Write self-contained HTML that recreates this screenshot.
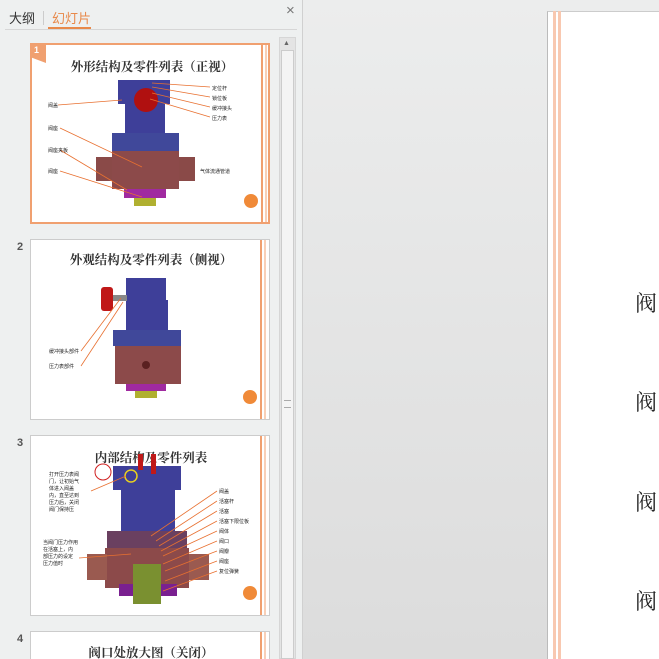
<!DOCTYPE html>
<html style="width:659px;height:659px;overflow:hidden"><head><meta charset="utf-8"><style>
*{margin:0;padding:0;box-sizing:border-box}
body{width:659px;height:659px;overflow:hidden;position:relative;background:#e6e6e6;font-family:"Liberation Sans","Noto Sans CJK SC",sans-serif}
.left{position:absolute;left:0;top:0;width:303px;height:659px;background:#eef0f0;border-right:1px solid #d0d0d0}
.right{position:absolute;left:303px;top:0;width:356px;height:659px;background:linear-gradient(#eceded,#dcdcdc)}
.tab{position:absolute;top:8px;font-size:13px;color:#333}
.thumb{position:absolute;left:30px;width:240px;height:181px;background:#fff;border:1px solid #ccc;overflow:hidden}
.num{position:absolute;left:17px;font-size:11px;color:#555;font-weight:bold}
.tt{position:absolute;left:0;width:240px;text-align:center;font:bold 12.5px "Liberation Serif","Noto Serif CJK SC",serif;color:#333}
.slide{position:absolute;left:547px;top:11px;width:112px;height:648px;background:#fff;border-left:1px solid #bbb;border-top:1px solid #ccc}
.ch{position:absolute;left:635px;font:22px "Liberation Serif","Noto Serif CJK SC",serif;color:#222}
</style></head><body>
<div class="left">
<div class="tab" style="left:9px">大纲</div>
<div style="position:absolute;left:43px;top:11px;width:1px;height:14px;background:#ccc"></div>
<div class="tab" style="left:52px;color:#e8894a">幻灯片</div>
<div style="position:absolute;left:48px;top:27px;width:43px;height:2px;background:#e8894a"></div>
<div style="position:absolute;left:5px;top:29px;width:292px;height:1px;background:#d6d6d6"></div>
<div style="position:absolute;left:286px;top:2px;font-size:15px;color:#777">×</div>
<div style="position:absolute;left:279px;top:37px;width:17px;height:622px;background:#e4e4e4;border:1px solid #d6d6d6"></div>
<div style="position:absolute;left:281px;top:50px;width:13px;height:609px;background:#f4f4f4;border:1px solid #ccc"></div>
<div style="position:absolute;left:283px;top:40px;font-size:7px;color:#666">▲</div>
<div style="position:absolute;left:284px;top:400px;width:7px;height:8px;border-top:1px solid #aaa;border-bottom:1px solid #aaa"></div>
</div>
<div class="right"></div>

<!-- slide 1 -->
<div class="thumb" style="top:43px;border:2px solid #f0a070;overflow:visible">
<div style="position:absolute;left:-2px;top:-2px;width:16px;height:20px;background:#f0a070;clip-path:polygon(0 0,100% 0,100% 100%,0 70%)"></div>
<div style="position:absolute;left:2px;top:0;font-size:9px;color:#fff;font-weight:bold">1</div>
<div class="tt" style="top:12px">外形结构及零件列表（正视）</div>
<svg width="238" height="179" style="position:absolute;left:0;top:0">
<line x1="230" y1="0" x2="230" y2="179" stroke="#f0a070" stroke-width="2"/><line x1="234" y1="0" x2="234" y2="179" stroke="#f0a070"/>
<rect x="86" y="35" width="52" height="24" fill="#3e3f99"/>
<rect x="93" y="58" width="40" height="32" fill="#3e3f99"/>
<rect x="80" y="88" width="67" height="18" fill="#40489a"/>
<rect x="80" y="106" width="67" height="38" fill="#8c4a4a"/>
<rect x="64" y="112" width="16" height="24" fill="#8a4a48"/><rect x="147" y="112" width="16" height="24" fill="#8a4a48"/>
<rect x="92" y="144" width="42" height="9" fill="#a02aa0"/>
<rect x="102" y="153" width="22" height="8" fill="#b0b030"/>
<circle cx="114" cy="55" r="12" fill="#b01010"/>
<g stroke="#e87030" stroke-width="0.8"><line x1="120" y1="38" x2="178" y2="42"/><line x1="120" y1="42" x2="178" y2="52"/><line x1="120" y1="48" x2="178" y2="62"/><line x1="118" y1="54" x2="178" y2="72"/><line x1="26" y1="60" x2="90" y2="55"/><line x1="28" y1="83" x2="110" y2="122"/><line x1="28" y1="105" x2="95" y2="145"/><line x1="28" y1="126" x2="110" y2="152"/></g>
<g font-size="5" fill="#222"><text x="16" y="62">阀盖</text><text x="16" y="85">阀座</text><text x="16" y="107">阀座夹板</text><text x="16" y="128">阀座</text><text x="180" y="45">定位杆</text><text x="180" y="55">锁位板</text><text x="180" y="65">缓冲接头</text><text x="180" y="75">压力表</text><text x="168" y="128">气体流通管道</text></g>
<circle cx="219" cy="156" r="7" fill="#f08a38"/>
</svg></div>

<!-- slide 2 -->
<div class="num" style="top:241px">2</div>
<div class="thumb" style="top:239px">
<div class="tt" style="top:10px">外观结构及零件列表（侧视）</div>
<svg width="238" height="179" style="position:absolute;left:0;top:0">
<line x1="230" y1="0" x2="230" y2="179" stroke="#f0a070" stroke-width="2"/><line x1="234" y1="0" x2="234" y2="179" stroke="#f0a070"/>
<rect x="95" y="38" width="40" height="24" fill="#3e3f99"/>
<rect x="95" y="60" width="42" height="32" fill="#3e3f99"/>
<rect x="82" y="90" width="68" height="16" fill="#40489a"/>
<rect x="84" y="106" width="66" height="38" fill="#8c4a4a"/>
<rect x="95" y="144" width="40" height="7" fill="#a02aa0"/>
<rect x="104" y="151" width="22" height="7" fill="#b0b030"/>
<rect x="70" y="47" width="12" height="24" rx="3" fill="#c01818"/><rect x="82" y="55" width="14" height="6" fill="#888"/>
<circle cx="115" cy="125" r="4" fill="#5a2020"/>
<g stroke="#e87030" stroke-width="0.8"><line x1="50" y1="111" x2="90" y2="58"/><line x1="50" y1="126" x2="92" y2="62"/></g>
<g font-size="5" fill="#222"><text x="18" y="113">缓冲接头部件</text><text x="18" y="128">压力表部件</text></g>
<circle cx="219" cy="157" r="7" fill="#f08a38"/>
</svg></div>

<!-- slide 3 -->
<div class="num" style="top:437px">3</div>
<div class="thumb" style="top:435px">
<div class="tt" style="top:12px">内部结构及零件列表</div>
<svg width="238" height="179" style="position:absolute;left:0;top:0">
<line x1="230" y1="0" x2="230" y2="179" stroke="#f0a070" stroke-width="2"/><line x1="234" y1="0" x2="234" y2="179" stroke="#f0a070"/>
<rect x="82" y="30" width="68" height="24" fill="#3e3f99"/>
<rect x="90" y="50" width="54" height="48" fill="#3e3f99"/>
<rect x="76" y="95" width="80" height="18" fill="#6a4060"/>
<rect x="74" y="112" width="84" height="40" fill="#8c4a4a"/>
<rect x="56" y="118" width="20" height="26" fill="#9a5a50"/><rect x="158" y="118" width="20" height="26" fill="#9a5a50"/>
<rect x="88" y="148" width="58" height="12" fill="#7a2090"/>
<rect x="102" y="128" width="28" height="40" fill="#7a9030"/>
<rect x="107" y="18" width="5" height="16" fill="#c01818"/><rect x="120" y="18" width="5" height="20" fill="#c01818"/>
<circle cx="100" cy="40" r="6" fill="none" stroke="#e8d020" stroke-width="1.5"/>
<circle cx="72" cy="36" r="8" fill="none" stroke="#d02020"/>
<g stroke="#e87030" stroke-width="0.8"><line x1="186" y1="55" x2="120" y2="100"/><line x1="186" y1="65" x2="125" y2="105"/><line x1="186" y1="75" x2="128" y2="110"/><line x1="186" y1="85" x2="130" y2="115"/><line x1="186" y1="95" x2="132" y2="120"/><line x1="186" y1="105" x2="132" y2="128"/><line x1="186" y1="115" x2="134" y2="135"/><line x1="186" y1="125" x2="134" y2="145"/><line x1="186" y1="135" x2="132" y2="155"/><line x1="48" y1="122" x2="100" y2="118"/><line x1="60" y1="55" x2="95" y2="40"/></g>
<g font-size="5" fill="#222"><text x="18" y="40">打开压力表阀</text><text x="18" y="47">门，让初始气</text><text x="18" y="54">体进入阀盖</text><text x="18" y="61">内，直至达到</text><text x="18" y="68">压力后，关闭</text><text x="18" y="75">阀门保持压</text><text x="12" y="108">当阀门压力作用</text><text x="12" y="115">在活塞上，内</text><text x="12" y="122">部压力的设定</text><text x="12" y="129">压力值时</text>
<text x="188" y="57">阀盖</text><text x="188" y="67">活塞杆</text><text x="188" y="77">活塞</text><text x="188" y="87">活塞下限位板</text><text x="188" y="97">阀体</text><text x="188" y="107">阀口</text><text x="188" y="117">阀瓣</text><text x="188" y="127">阀座</text><text x="188" y="137">复位弹簧</text></g>
<circle cx="219" cy="157" r="7" fill="#f08a38"/>
</svg></div>

<!-- slide 4 -->
<div class="num" style="top:633px">4</div>
<div class="thumb" style="top:631px;height:28px;border-bottom:none">
<div class="tt" style="top:11px">阀口处放大图（关闭）</div>
<svg width="238" height="40" style="position:absolute;left:0;top:0"><line x1="230" y1="0" x2="230" y2="40" stroke="#f0a070" stroke-width="2"/><line x1="234" y1="0" x2="234" y2="40" stroke="#f0a070"/></svg>
</div>

<!-- main slide -->
<div class="slide"></div>
<div style="position:absolute;left:553px;top:11px;width:3px;height:648px;background:#f8c8b0"></div>
<div style="position:absolute;left:558px;top:11px;width:3px;height:648px;background:#f8c8b0"></div>
<div class="ch" style="top:287px">阀</div>
<div class="ch" style="top:386px">阀</div>
<div class="ch" style="top:486px">阀</div>
<div class="ch" style="top:585px">阀</div>
</body></html>
